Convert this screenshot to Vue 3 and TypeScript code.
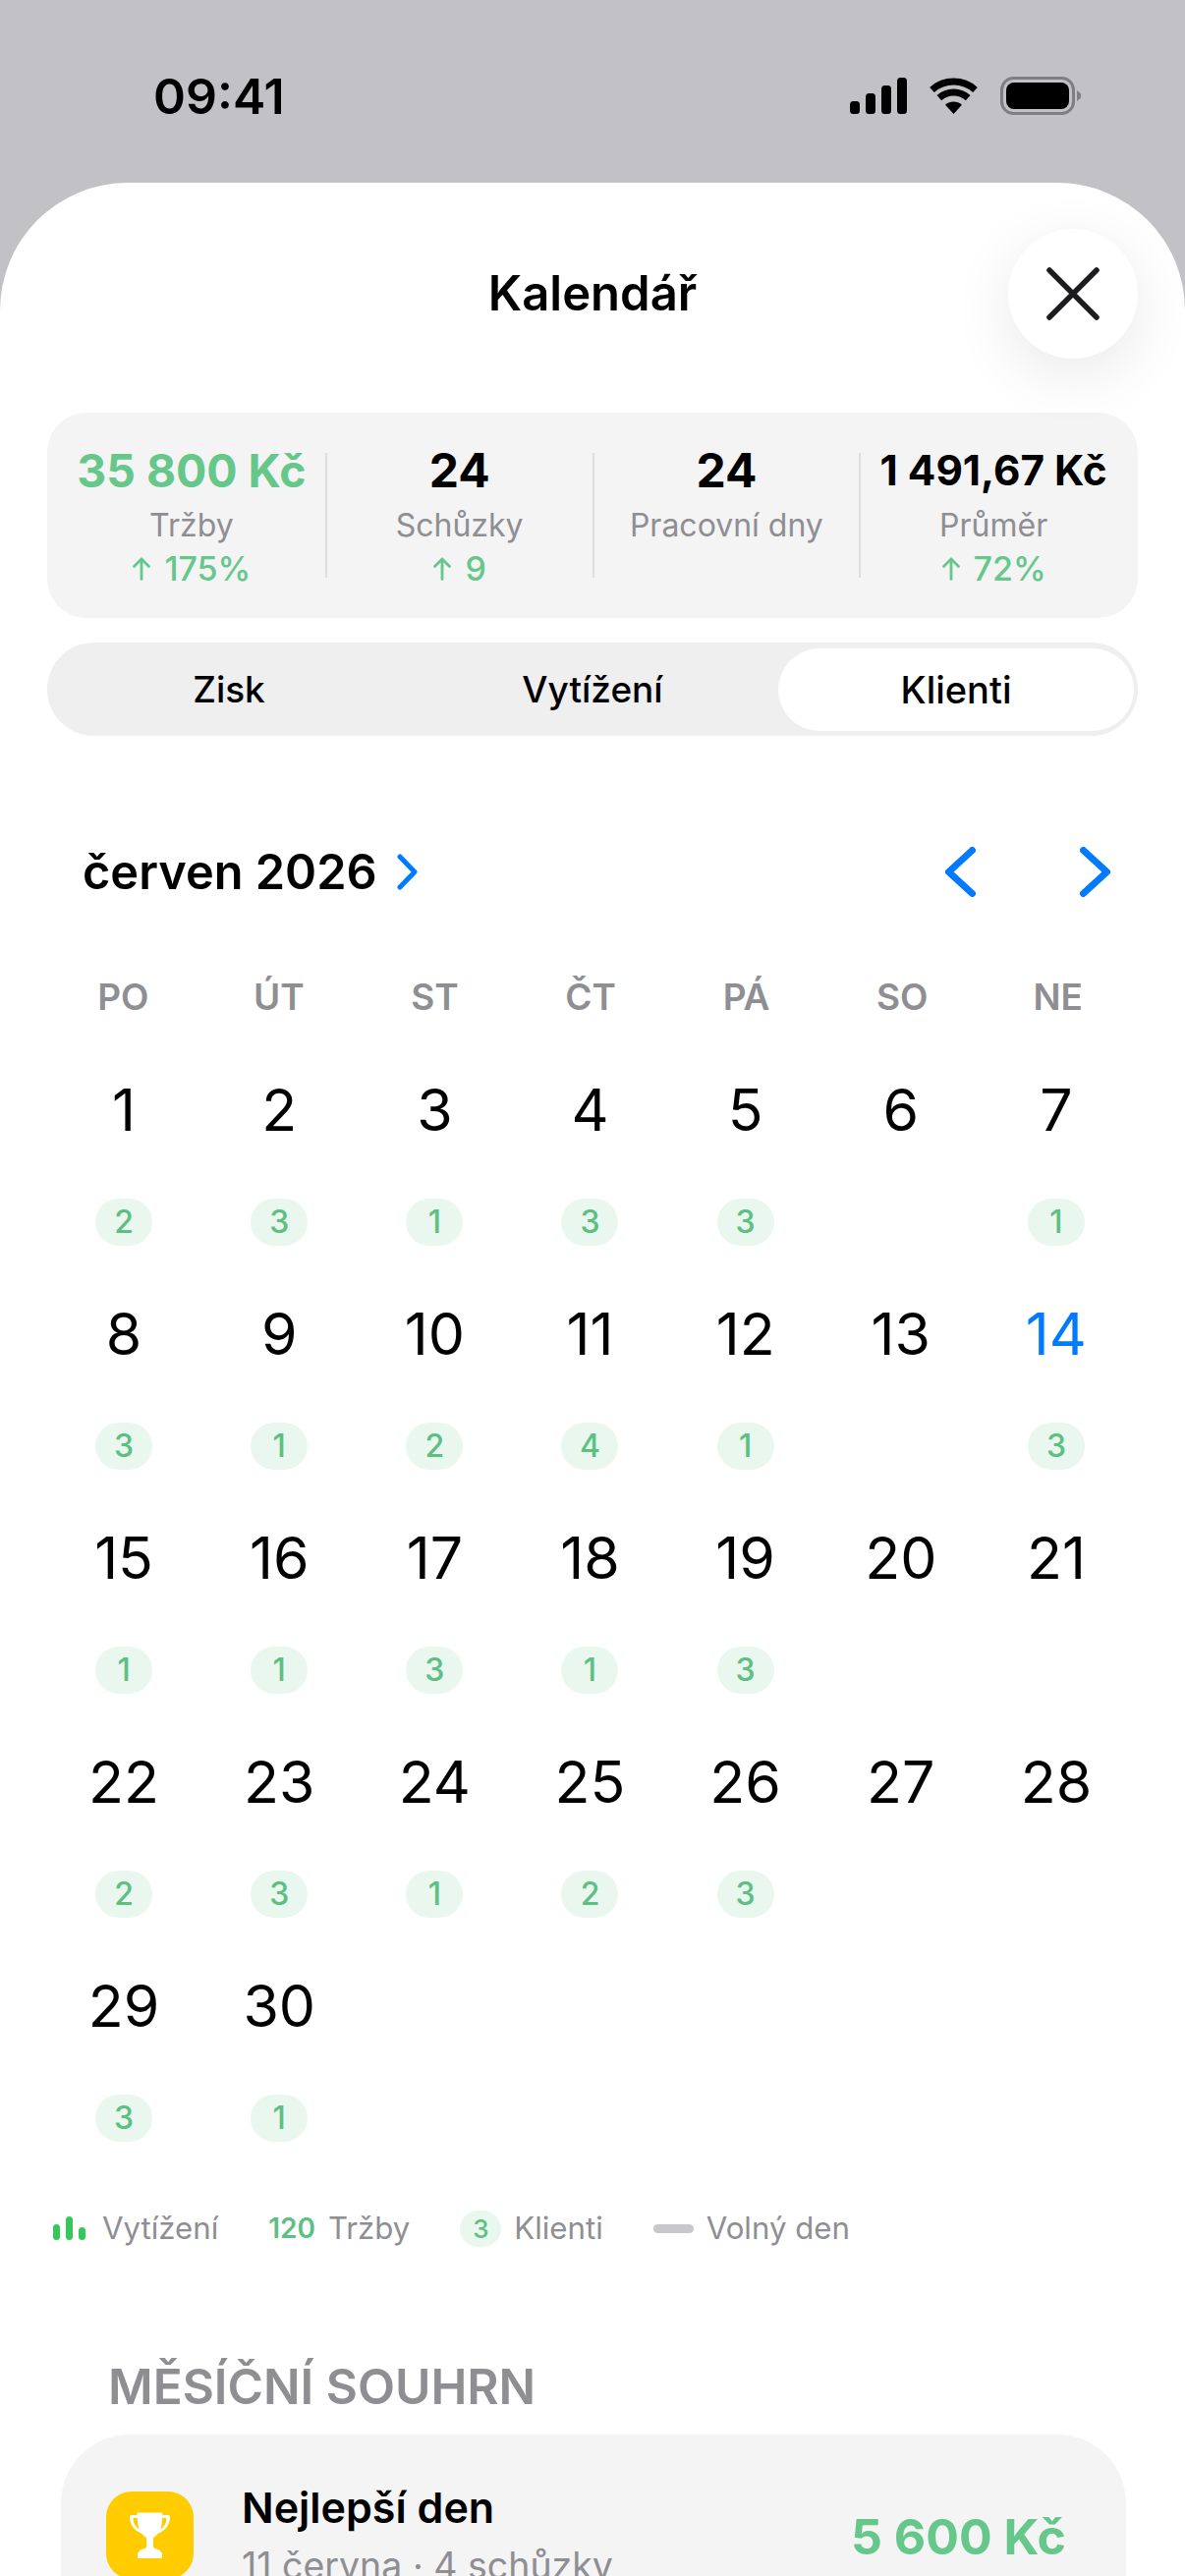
<script setup lang="ts">
interface Stat { value: string; label: string; delta?: string; green?: boolean; small?: boolean }
const stats: Stat[] = [
  { value: '35 800 Kč', label: 'Tržby', delta: '175%', green: true },
  { value: '24', label: 'Schůzky', delta: '9' },
  { value: '24', label: 'Pracovní dny' },
  { value: '1 491,67 Kč', label: 'Průměr', delta: '72%', small: true },
]
const tabs = ['Zisk', 'Vytížení', 'Klienti']
const weekdays = ['PO', 'ÚT', 'ST', 'ČT', 'PÁ', 'SO', 'NE']
const counts: (number | null)[] = [
  2, 3, 1, 3, 3, null, 1,
  3, 1, 2, 4, 1, null, 3,
  1, 1, 3, 1, 3, null, null,
  2, 3, 1, 2, 3, null, null,
  3, 1,
]
</script>

<template>
  <div class="screen">
    <header class="status">
      <span class="time">09:41</span>
      <div class="status-icons">
        <svg width="58" height="37" viewBox="0 0 58 37" fill="#000">
          <rect x="0" y="24" width="10" height="13" rx="3.5" />
          <rect x="16" y="16" width="10" height="21" rx="3.5" />
          <rect x="32" y="8" width="10" height="29" rx="3.5" />
          <rect x="48" y="0" width="10" height="37" rx="3.5" />
        </svg>
        <svg width="51" height="37" viewBox="0 0 51 37">
          <path d="M25.5 37 L17.1 27.7 A12.5 12.5 0 0 1 33.9 27.7 Z" fill="#000" />
          <path d="M10.8 20.65 A22 22 0 0 1 40.2 20.65" fill="none" stroke="#000" stroke-width="7" />
          <path d="M3.5 12.5 A33 33 0 0 1 47.5 12.5" fill="none" stroke="#000" stroke-width="7" />
        </svg>
        <svg width="82" height="39" viewBox="0 0 82 39">
          <rect x="1.5" y="1.5" width="73" height="36" rx="12" fill="none" stroke="#7f7f83" stroke-width="3" />
          <rect x="6" y="6" width="64" height="27" rx="8" fill="#000" />
          <path d="M78 14 L82 17.5 V21.5 L78 25 Z" fill="#7f7f83" />
        </svg>
      </div>
    </header>

    <main class="sheet">
      <div class="sheet-head">
        <h1 class="title">Kalendář</h1>
        <button class="close" type="button" aria-label="Zavřít">
          <svg width="54" height="54" viewBox="0 0 54 54" fill="none" stroke="#1c1c1e" stroke-width="5.5" stroke-linecap="round">
            <path d="M3 3 L51 51 M51 3 L3 51" />
          </svg>
        </button>
      </div>

      <section class="stats">
        <div v-for="s in stats" :key="s.label" class="stat">
          <div class="stat-value" :class="{ green: s.green, small: s.small }">{{ s.value }}</div>
          <div class="stat-label">{{ s.label }}</div>
          <div v-if="s.delta" class="stat-delta">
            <svg width="20" height="24" viewBox="0 0 20 24" fill="none" stroke="#66c78a" stroke-width="2.8" stroke-linecap="round" stroke-linejoin="round">
              <path d="M10 22.5 V2 M2.5 9.5 L10 2 L17.5 9.5" />
            </svg>
            <span>{{ s.delta }}</span>
          </div>
        </div>
      </section>

      <nav class="tabs">
        <div v-for="(t, i) in tabs" :key="t" class="tab" :class="{ active: i === 2 }">{{ t }}</div>
      </nav>

      <div class="month-row">
        <div class="month">
          <span>červen 2026</span>
          <svg width="21" height="37" viewBox="0 0 21 37" fill="none" stroke="#007aff" stroke-width="5" stroke-linecap="round" stroke-linejoin="round">
            <path d="M3 3 L18 18.5 L3 34" />
          </svg>
        </div>
        <div class="month-nav">
          <svg width="31" height="51" viewBox="0 0 31 51" fill="none" stroke="#007aff" stroke-width="7" stroke-linecap="round" stroke-linejoin="round">
            <path d="M27.5 3.5 L3.5 25.5 L27.5 47.5" />
          </svg>
          <svg width="31" height="51" viewBox="0 0 31 51" fill="none" stroke="#007aff" stroke-width="7" stroke-linecap="round" stroke-linejoin="round">
            <path d="M3.5 3.5 L27.5 25.5 L3.5 47.5" />
          </svg>
        </div>
      </div>

      <div class="weekdays">
        <span v-for="d in weekdays" :key="d">{{ d }}</span>
      </div>

      <div class="days">
        <div v-for="(c, i) in counts" :key="i" class="day">
          <div class="num" :class="{ today: i === 13 }">{{ i + 1 }}</div>
          <div v-if="c !== null" class="pill">{{ c }}</div>
        </div>
      </div>

      <div class="legend">
        <div class="legend-item wide">
          <span class="bars"><i class="b1"></i><i class="b2"></i><i class="b3"></i></span>
          <span class="legend-text">Vytížení</span>
        </div>
        <div class="legend-item">
          <span class="legend-num">120</span>
          <span class="legend-text">Tržby</span>
        </div>
        <div class="legend-item">
          <span class="legend-pill">3</span>
          <span class="legend-text">Klienti</span>
        </div>
        <div class="legend-item">
          <span class="dash"></span>
          <span class="legend-text">Volný den</span>
        </div>
      </div>

      <h2 class="section">MĚSÍČNÍ SOUHRN</h2>

      <section class="card">
        <div class="card-icon">
          <svg width="41" height="47" viewBox="0 0 41 47" fill="#fff">
            <path d="M8 0.5 H33 C33 0.5 33.5 2 33.5 3 H39 C40.5 3 41 4 41 5 C41 13 36 19 29 21.5 C27.5 23.5 25.5 25 24 26 V35 C24 36.5 26 37.5 29 38 C31 38.5 31.5 39.5 31.5 41 H9.5 C9.5 39.5 10 38.5 12 38 C15 37.5 17 36.5 17 35 V26 C15.5 25 13.5 23.5 12 21.5 C5 19 0 13 0 5 C0 4 0.5 3 2 3 H7.5 C7.5 2 8 0.5 8 0.5 Z M3.5 6 C3.5 11 6 15 9.5 17.5 C8.5 14 8 10 7.8 6 Z M37.5 6 H33.2 C33 10 32.5 14 31.5 17.5 C35 15 37.5 11 37.5 6 Z" fill-rule="evenodd" />
            <rect x="8" y="41" width="25" height="6" rx="1" />
          </svg>
        </div>
        <div class="card-text">
          <div class="card-title">Nejlepší den</div>
          <div class="card-sub">11 června · 4 schůzky</div>
        </div>
        <div class="card-amount">5 600 Kč</div>
      </section>
    </main>
  </div>
</template>

<style>
html, body { margin: 0; background: #fff; }
</style>

<style scoped>
.screen {
  width: 1206px;
  height: 2622px;
  overflow: hidden;
  background: #c2c1c6;
  font-family: Inter, "Noto Sans", sans-serif;
  color: #000;
}
.status {
  height: 186px;
  box-sizing: border-box;
  padding: 72px 106px 0 156px;
  display: flex;
  justify-content: space-between;
  align-items: flex-start;
}
.time { font-size: 50px; font-weight: 600; line-height: 52px; }
.status-icons { display: flex; align-items: center; gap: 22px; padding-top: 6px; }

.sheet {
  height: 2436px;
  box-sizing: border-box;
  background: #fff;
  border-radius: 130px 130px 0 0;
  padding: 47px 48px 0;
}
.sheet-head {
  display: grid;
  grid-template-columns: 1fr auto 1fr;
  align-items: center;
}
.title { grid-column: 2; margin: 0; font-size: 49px; font-weight: 600; line-height: 60px; }
.close {
  grid-column: 3;
  justify-self: end;
  width: 132px;
  height: 132px;
  border: 0;
  padding: 0;
  border-radius: 50%;
  background: #fff;
  box-shadow: 0 16px 64px rgba(0, 0, 0, 0.09);
  display: flex;
  align-items: center;
  justify-content: center;
}

.stats {
  margin-top: 55px;
  height: 209px;
  box-sizing: border-box;
  padding: 41px 12px 0 11px;
  border-radius: 40px;
  background: #f4f4f5;
  display: grid;
  grid-template-columns: repeat(4, 1fr);
  align-items: start;
}
.stat {
  height: 127px;
  text-align: center;
  border-left: 2px solid #dededf;
  box-sizing: border-box;
  display: flex;
  flex-direction: column;
  align-items: center;
}
.stat:first-child { border-left: 0; }
.stat-value { font-size: 48px; line-height: 36px; font-weight: 700; white-space: nowrap; }
.stat-value.green { color: #66c78a; font-size: 46.4px; }
.stat-value.small { font-size: 42.3px; }
.stat-label { margin-top: 18px; font-size: 32px; line-height: 40px; color: #8e8e93; white-space: nowrap; }
.stat-delta {
  margin-top: 6px;
  display: flex;
  align-items: center;
  gap: 13px;
  font-size: 34px;
  line-height: 36px;
  font-weight: 500;
  color: #66c78a;
}

.tabs {
  margin-top: 25px;
  height: 95px;
  border-radius: 48px;
  background: #efeff0;
  display: grid;
  grid-template-columns: repeat(3, 1fr);
}
.tab {
  display: flex;
  align-items: center;
  justify-content: center;
  font-size: 37px;
  font-weight: 500;
}
.tab.active {
  margin: 6px 4px 5px 4px;
  background: #fff;
  border-radius: 42px;
  font-size: 38px;
}

.month-row {
  margin-top: 100px;
  height: 76px;
  padding: 0 28px 0 36px;
  display: flex;
  align-items: center;
  justify-content: space-between;
}
.month { display: flex; align-items: center; gap: 20px; font-size: 48.7px; font-weight: 600; }
.month-nav { display: flex; align-items: center; gap: 106px; }

.weekdays {
  margin: 65px 2px 0 -2px;
  height: 50px;
  display: grid;
  grid-template-columns: repeat(7, 1fr);
  text-align: center;
  font-size: 37px;
  line-height: 50px;
  font-weight: 600;
  color: #8e8e93;
}
.days {
  margin: 46px 4px 0 -1px;
  display: grid;
  grid-template-columns: repeat(7, 1fr);
  grid-auto-rows: 228px;
}
.day { display: flex; flex-direction: column; align-items: center; }
.num { height: 88px; line-height: 88px; font-size: 59px; font-weight: 400; }
.num.today { color: #007aff; }
.pill {
  margin-top: 46px;
  width: 58px;
  height: 48px;
  border-radius: 24px;
  background: #e9f7ef;
  color: #5cc083;
  font-size: 32px;
  line-height: 48px;
  font-weight: 500;
  text-align: center;
}

.legend {
  margin-top: 22px;
  height: 40px;
  padding-left: 6px;
  display: flex;
  align-items: center;
  gap: 51px;
  color: #8e8e93;
}
.legend-item { display: flex; align-items: center; gap: 13px; }
.legend-item.wide { gap: 17px; }
.legend-text { font-size: 31.2px; line-height: 40px; }
.bars { display: flex; align-items: flex-end; gap: 6px; height: 24px; }
.bars i { display: block; width: 7px; border-radius: 4px; background: #34c759; }
.b1 { height: 16px; }
.b2 { height: 24px; }
.b3 { height: 13px; }
.legend-num { font-size: 28px; font-weight: 600; color: #5cc083; }
.legend-pill {
  width: 42px;
  height: 37px;
  border-radius: 19px;
  background: #e9f7ef;
  color: #5cc083;
  font-size: 26px;
  line-height: 37px;
  font-weight: 500;
  text-align: center;
}
.dash { width: 41px; height: 9px; border-radius: 5px; background: #c7c7cc; }

.section {
  margin: 112px 0 0 62px;
  font-size: 49.5px;
  line-height: 58px;
  font-weight: 600;
  color: #8e8e93;
}
.card {
  margin: 20px 12px 0 14px;
  height: 300px;
  box-sizing: border-box;
  padding: 58px 61px 0 46px;
  border-radius: 70px;
  background: #f4f4f5;
  display: flex;
  align-items: flex-start;
}
.card-icon {
  width: 89px;
  height: 89px;
  border-radius: 26px;
  background: #ffcc00;
  display: flex;
  align-items: center;
  justify-content: center;
  flex: none;
}
.card-text { margin: -9px 0 0 49px; flex: 1; }
.card-title { font-size: 43px; line-height: 50px; font-weight: 600; }
.card-sub { margin-top: 12px; font-size: 37.5px; line-height: 46px; color: #8e8e93; }
.card-amount { margin-top: 18px; font-size: 50px; line-height: 56px; font-weight: 700; color: #66c78a; }
</style>
